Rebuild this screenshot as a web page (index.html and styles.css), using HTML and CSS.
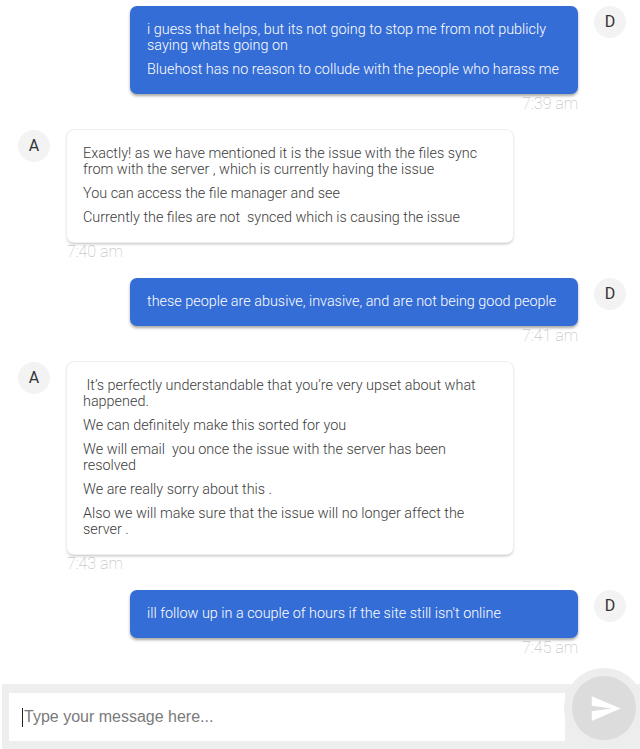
FILE: index.html
```html
<!DOCTYPE html>
<html>
<head>
<meta charset="utf-8">
<link rel="stylesheet" href="styles.css">
</head>
<body>
<div class="chat">
  <div class="messages">
    <div class="row out">
      <div class="col">
        <div class="bubble">
          <p>i guess that helps, but its not going to stop me from not publicly saying whats going on</p>
          <p>Bluehost has no reason to collude with the people who harass me</p>
        </div>
        <div class="time">7:39 am</div>
      </div>
      <div class="avatar">D</div>
    </div>
    <div class="row in">
      <div class="avatar">A</div>
      <div class="col">
        <div class="bubble">
          <p>Exactly! as we have mentioned it is the issue with the files sync from with the server , which is currently having the issue</p>
          <p>You can access the file manager and see</p>
          <p>Currently the files are not &nbsp;synced which is causing the issue</p>
        </div>
        <div class="time">7:40 am</div>
      </div>
    </div>
    <div class="row out">
      <div class="col">
        <div class="bubble">
          <p>these people are abusive, invasive, and are not being good people</p>
        </div>
        <div class="time">7:41 am</div>
      </div>
      <div class="avatar">D</div>
    </div>
    <div class="row in">
      <div class="avatar">A</div>
      <div class="col">
        <div class="bubble">
          <p>&nbsp;It’s perfectly understandable that you’re very upset about what happened.</p>
          <p>We can definitely make this sorted for you</p>
          <p>We will email &nbsp;you once the issue with the server has been resolved</p>
          <p>We are really sorry about this .</p>
          <p>Also we will make sure that the issue will no longer affect the server .</p>
        </div>
        <div class="time">7:43 am</div>
      </div>
    </div>
    <div class="row out">
      <div class="col">
        <div class="bubble">
          <p>ill follow up in a couple of hours if the site still isn't online</p>
        </div>
        <div class="time">7:45 am</div>
      </div>
      <div class="avatar">D</div>
    </div>
  </div>
  <div class="composer">
    <div class="input"><span class="caret"></span><span class="placeholder">Type your message here...</span></div>
    <button class="send" type="button">
      <svg viewBox="0 0 24 24" width="33" height="33"><path d="M2.01 21L23 12 2.01 3 2 10l15 2-15 2z" fill="#fff"/></svg>
    </button>
  </div>
</div>
</body>
</html>
```

FILE: styles.css
```css
* { box-sizing: border-box; }
html, body {
  margin: 0;
  padding: 0;
  background: #fff;
}
body {
  font-family: Roboto, "Noto Sans", sans-serif;
  width: 640px;
  height: 749px;
  overflow: hidden;
}
.chat {
  display: flex;
  flex-direction: column;
  height: 749px;
}
.messages {
  flex: 1;
  padding-top: 6px;
  display: flex;
  flex-direction: column;
  gap: 16px;
}
.row {
  display: flex;
  align-items: flex-start;
}
.row.out {
  justify-content: flex-end;
  padding-right: 14px;
  gap: 16px;
}
.row.in {
  padding-left: 18px;
  gap: 17px;
}
.col {
  display: flex;
  flex-direction: column;
}
.row.out .col { width: 448px; }
.row.in .col { width: 446px; }
.avatar {
  width: 32px;
  height: 32px;
  flex: none;
  border-radius: 50%;
  background: #f3f3f3;
  color: #333;
  font-size: 16px;
  line-height: 32px;
  text-align: center;
}
.bubble {
  border-radius: 7px;
  padding: 16px 17px;
  font-size: 14.4px;
  line-height: 16px;
  font-weight: 300;
}
.bubble p { margin: 0; }
.bubble p + p { margin-top: 8px; }
.row.out .bubble {
  background: #356dd6;
  color: #fff;
  box-shadow: 0 2px 3px rgba(0, 0, 0, 0.35);
}
.row.in .bubble {
  background: #fff;
  color: #3c3c3c;
  padding-left: 16px;
  box-shadow: 0 0 0 1px #efefef, 0 2px 3px rgba(0, 0, 0, 0.25);
}
.time {
  font-size: 16px;
  font-weight: 100;
  color: #b5b5b5;
  line-height: 20px;
}
.row.out .time { text-align: right; }
.row.in .time { text-align: left; }
.composer {
  position: relative;
  height: 65px;
  margin-left: 2px;
  background: #eeeeee;
  padding: 9px 0 8px 7px;
  display: flex;
}
.input {
  width: 556px;
  height: 48px;
  background: #fff;
  display: flex;
  align-items: center;
  padding-left: 13px;
  font-family: "Liberation Sans", Arial, sans-serif;
  font-size: 16px;
}
.caret {
  width: 1px;
  height: 19px;
  background: #222;
  margin-right: 1px;
}
.placeholder { color: #7a7a7a; }
.send {
  position: absolute;
  left: 562px;
  top: -16px;
  width: 80px;
  height: 80px;
  border-radius: 50%;
  border: 8px solid #ededed;
  background: #dcdcdc;
  padding: 0;
  display: flex;
  align-items: center;
  justify-content: center;
  cursor: pointer;
}
.send svg { display: block; margin-left: 2px; }
```
